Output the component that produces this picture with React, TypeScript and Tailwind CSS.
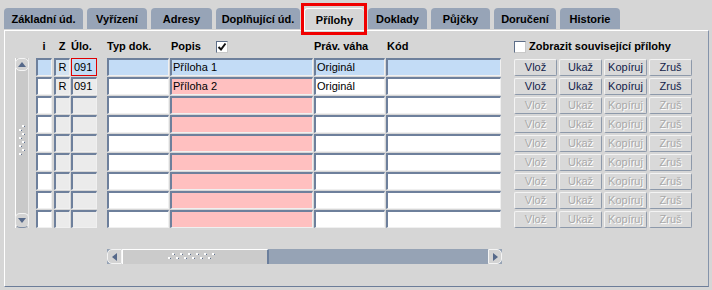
import { FC } from "react";

const tabs = [
  { label: "Základní úd.", w: "w-[79px]" },
  { label: "Vyřízení", w: "w-[60px]" },
  { label: "Adresy", w: "w-[61px]" },
  { label: "Doplňující úd.", w: "w-[84px]" },
  { label: "Přílohy", w: "w-[60px]", active: true },
  { label: "Doklady", w: "w-[59px]" },
  { label: "Půjčky", w: "w-[59px]" },
  { label: "Doručení", w: "w-[62px]" },
  { label: "Historie", w: "w-[60px]" },
];

const sunken =
  "h-[18px] box-border border-t-2 border-l-2 border-r border-b border-t-[#6e809c] border-l-[#6e809c] border-r-[#f0f0f0] border-b-[#f0f0f0] flex items-center overflow-hidden";

const rows = [
  { sel: true, z: "R", ulo: "091", popis: "Příloha 1", vaha: "Originál", enabled: true },
  { z: "R", ulo: "091", popis: "Příloha 2", vaha: "Originál", enabled: true },
  {}, {}, {}, {}, {}, {}, {},
] as { sel?: boolean; z?: string; ulo?: string; popis?: string; vaha?: string; enabled?: boolean }[];

const Checkbox = ({ checked }: { checked?: boolean }) => (
  <div className="w-[12px] h-[12px] bg-white border-t border-l border-[#5d6e88] border-r border-b border-r-[#c8c8c8] border-b-[#c8c8c8] flex items-center justify-center">
    {checked && (
      <svg width="10" height="10" viewBox="0 0 10 10">
        <path d="M1.5 5 L4 7.5 L8.5 1.5" stroke="#111" strokeWidth="2" fill="none" />
      </svg>
    )}
  </div>
);

const Btn = ({ label, enabled }: { label: string; enabled?: boolean }) => (
  <div
    className={
      "w-[43px] h-[17px] box-border rounded-[2px] border border-t-[#f4f4f4] border-l-[#f4f4f4] border-r-[#8d99aa] border-b-[#8d99aa] bg-[#d9d9d9] flex items-center justify-center text-[11px] " +
      (enabled ? "text-[#13234a]" : "text-[#a9a9a9] [text-shadow:1px_1px_0_#ffffff]")
    }
  >
    {label}
  </div>
);

const Grip = ({ vertical }: { vertical?: boolean }) => {
  const dots = vertical ? [0, 1, 2, 3] : [0, 1, 2, 3, 4, 5];
  return (
    <svg width={vertical ? 9 : 54} height={vertical ? 34 : 10}>
      {dots.map((i) =>
        vertical ? (
          <g key={i}>
            <rect x={4} y={i * 8} width={2} height={2} fill="#ffffff" />
            <rect x={6} y={i * 8 + 1} width={1} height={1} fill="#5f7190" />
            <rect x={1} y={i * 8 + 4} width={2} height={2} fill="#ffffff" />
            <rect x={3} y={i * 8 + 5} width={1} height={1} fill="#5f7190" />
          </g>
        ) : (
          <g key={i}>
            <rect x={4 + i * 8} y={1} width={2} height={2} fill="#ffffff" />
            <rect x={6 + i * 8} y={2} width={1} height={1} fill="#5f7190" />
            <rect x={i * 8} y={5} width={2} height={2} fill="#ffffff" />
            <rect x={2 + i * 8} y={6} width={1} height={1} fill="#5f7190" />
          </g>
        )
      )}
    </svg>
  );
};

export default function App() {
  return (
    <div className="w-[712px] h-[290px] overflow-hidden bg-[#d6d6d6] font-['Liberation_Sans',Arial,sans-serif] text-[11px] text-black">
      {/* Tabs */}
      <div className="flex items-end gap-[4px] pl-[4px] h-[30px]">
        {tabs.map((t) => (
          <div key={t.label} className={"relative " + t.w}>
            <div
              className={
                "rounded-t-[4px] flex items-center justify-center font-bold " +
                (t.active ? "h-[22px] pt-[1px] bg-[#d6d6d6] border-t border-l border-white" : "h-[21px] pt-[2px] bg-[#97a4b7] mb-[1px]")
              }
            >
              {t.label}
            </div>
            {t.active && (
              <div className="absolute left-[-3px] right-[-3px] top-[-5px] bottom-[-5px] border-[3px] border-[#f00000]" />
            )}
          </div>
        ))}
      </div>

      {/* Panel */}
      <div className="ml-[4px] w-[705px] h-[257px] box-border border border-t-white border-l-white border-r-[#8493aa] border-b-[#6c7d99] flex items-start">
        {/* vertical scrollbar */}
        <div className="ml-[10px] mt-[27px] w-[14px] h-[170px] box-border bg-[#c9c9c9] border-l border-r border-l-white border-r-[#e8e8e8] flex flex-col items-center justify-between">
          <div className="w-[14px] h-[13px] rounded-[5px] bg-[#d3d3d3] border border-[#f4f4f4] flex items-center justify-center">
            <svg width="8" height="5"><path d="M0 5 L4 0 L8 5 Z" fill="#56698a" /></svg>
          </div>
          <Grip vertical />
          <div className="w-[14px] h-[15px] rounded-[5px] bg-[#d3d3d3] border border-[#f4f4f4] border-b-[#7f8ea6] flex items-center justify-center">
            <svg width="8" height="5"><path d="M0 0 L8 0 L4 5 Z" fill="#56698a" /></svg>
          </div>
        </div>

        {/* table */}
        <div className="ml-[7px] flex flex-col">
          <div className="mt-[9px] h-[13px] flex items-center font-bold">
            <div className="w-[16px] text-center">i</div>
            <div className="ml-[2px] w-[16px] text-center">Z</div>
            <div className="ml-[1px] w-[26px]">Úlo.</div>
            <div className="ml-[10px] w-[62px]">Typ dok.</div>
            <div className="ml-[1px] w-[143px] flex items-center">
              <span className="ml-[1px] w-[45px]">Popis</span>
              <Checkbox checked />
            </div>
            <div className="ml-[1px] w-[71px]">Práv. váha</div>
            <div className="ml-[1px] w-[115px] pl-[1px]">Kód</div>
          </div>

          <div className="mt-[5px] flex flex-col gap-[1px]">
            {rows.map((r, i) => {
              const selBg = "bg-[#c3dcf6]";
              return (
                <div key={i} className="flex">
                  <div className={sunken + " w-[16px] " + (r.sel ? selBg : "bg-white")} />
                  <div className={sunken + " ml-[2px] w-[16px] justify-center " + (r.sel ? "bg-[#d4e3f1]" : "bg-[#ebebeb]")}>
                    {r.z}
                  </div>
                  {r.sel ? (
                    <div className={"ml-[1px] w-[26px] h-[18px] box-border border border-[#e00000] pl-[2px] flex items-center " + selBg}>
                      {r.ulo}
                    </div>
                  ) : (
                    <div className={sunken + " ml-[1px] w-[26px] pl-[1px] bg-[#ebebeb]"}>{r.ulo}</div>
                  )}
                  <div className={sunken + " ml-[10px] w-[62px] " + (r.sel ? selBg : "bg-white")} />
                  <div className={sunken + " ml-[1px] w-[143px] pl-[1px] " + (r.sel ? selBg : "bg-[#ffc0c0]")}>
                    {r.popis}
                  </div>
                  <div className={sunken + " ml-[1px] w-[71px] pl-[1px] " + (r.sel ? selBg : "bg-white")}>
                    {r.vaha}
                  </div>
                  <div className={sunken + " ml-[1px] w-[115px] " + (r.sel ? selBg : "bg-white")} />
                </div>
              );
            })}
          </div>

          {/* horizontal scrollbar */}
          <div className="ml-[71px] mt-[21px] w-[395px] h-[15px] bg-[#96a3b5] flex">
            <div className="w-[15px] h-[15px] rounded-l-[5px] bg-[#d3d3d3] border border-[#f4f4f4] flex items-center justify-center">
              <svg width="5" height="8"><path d="M5 0 L0 4 L5 8 Z" fill="#56698a" /></svg>
            </div>
            <div className="w-[147px] h-[15px] box-border bg-[#cbcbcb] border-t border-l border-white border-r-2 border-r-[#6c7f9c] flex items-center justify-center">
              <Grip />
            </div>
            <div className="ml-auto w-[14px] h-[15px] rounded-r-[5px] bg-[#d3d3d3] border border-[#f4f4f4] flex items-center justify-center">
              <svg width="5" height="8"><path d="M0 0 L5 4 L0 8 Z" fill="#56698a" /></svg>
            </div>
          </div>
        </div>

        {/* buttons */}
        <div className="ml-[12px] flex flex-col">
          <div className="mt-[9px] h-[13px] flex items-center gap-[2px] font-bold">
            <Checkbox />
            <span className="ml-[1px]">Zobrazit související přílohy</span>
          </div>
          <div className="mt-[5px] flex flex-col gap-[1px]">
            {rows.map((r, i) => (
              <div key={i} className="h-[18px] flex items-center gap-[2px]">
                <Btn label="Vlož" enabled={r.enabled} />
                <Btn label="Ukaž" enabled={r.enabled} />
                <Btn label="Kopíruj" enabled={r.enabled} />
                <Btn label="Zruš" enabled={r.enabled} />
              </div>
            ))}
          </div>
        </div>
      </div>
    </div>
  );
}
